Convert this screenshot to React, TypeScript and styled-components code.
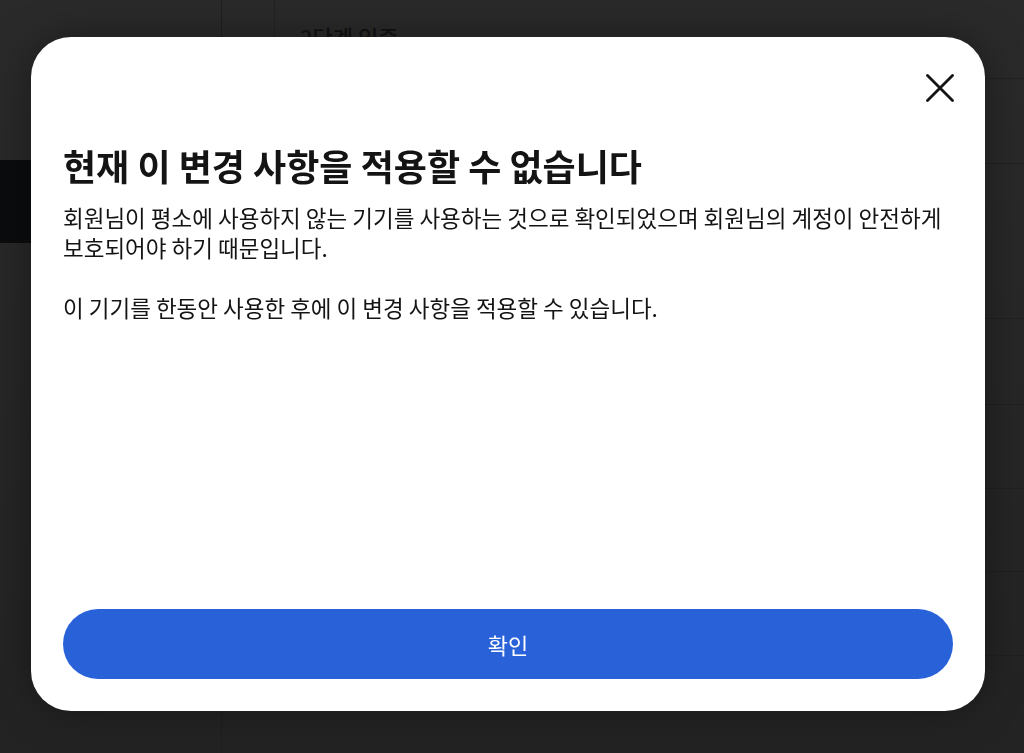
import React from "react";
import styled, { createGlobalStyle } from "styled-components";

const Global = createGlobalStyle`
  html, body { margin: 0; padding: 0; }
  body {
    background: #282828;
    font-family: "Noto Sans CJK KR", "Noto Sans", sans-serif;
    overflow: hidden;
  }
  * { box-sizing: border-box; }
`;

const Page = styled.div`
  display: flex;
  width: 1024px;
  height: 753px;
  background: linear-gradient(#2a2a2a, #232323);
`;

const Sidebar = styled.nav`
  width: 222px;
  flex: none;
  border-right: 1px solid #1f1f1f;
  display: flex;
  flex-direction: column;
  padding-top: 160px;
`;

const NavItem = styled.div<{ $active?: boolean }>`
  height: 83px;
  background: ${(p) => (p.$active ? "#0b0c0e" : "transparent")};
`;

const Main = styled.main`
  flex: 1;
  display: flex;
  flex-direction: column;
`;

const Header = styled.header`
  height: 79px;
  display: flex;
  border-bottom: 1px solid #222;
`;

const BackCol = styled.div`
  width: 53px;
  border-right: 1px solid #222;
`;

const PageTitle = styled.h1`
  margin: 0;
  padding: 20px 0 0 25px;
  font-size: 22px;
  font-weight: 500;
  color: #121212;
  line-height: 32px;
`;

const Row = styled.div<{ $h: number }>`
  height: ${(p) => p.$h}px;
  border-bottom: 1px solid #202020;
`;

const Overlay = styled.div`
  position: fixed;
  inset: 0;
  display: flex;
  align-items: flex-start;
  padding: 37px 0 0 31px;
`;

const Modal = styled.div`
  width: 954px;
  height: 674px;
  background: #fff;
  border-radius: 40px;
  padding: 32px;
  display: flex;
  flex-direction: column;
  box-shadow: 0 0 40px rgba(0, 0, 0, 0.35);
`;

const TopBar = styled.div`
  display: flex;
  justify-content: flex-end;
  height: 72px;
`;

const CloseButton = styled.button`
  width: 40px;
  height: 40px;
  margin-top: -1px;
  margin-right: -7px;
  border: none;
  background: none;
  padding: 0;
  display: flex;
  align-items: center;
  justify-content: center;
  cursor: pointer;
`;

const Title = styled.h2`
  margin: 0;
  font-size: 36px;
  font-weight: 700;
  line-height: 48px;
  color: #141414;
`;

const Body = styled.div`
  margin-top: 13px;
  margin-right: -4px;
  font-size: 22.5px;
  line-height: 30px;
  color: #141414;
  flex: 1;
`;

const Para = styled.p`
  margin: 0 0 30px 0;
`;

const ConfirmButton = styled.button`
  height: 70px;
  width: 100%;
  border: none;
  border-radius: 35px;
  background: #2962d8;
  color: #fff;
  font-family: "Noto Sans CJK KR", "Noto Sans", sans-serif;
  font-size: 22px;
  font-weight: 400;
  padding-bottom: 2px;
  cursor: pointer;
`;

export default function App() {
  return (
    <>
      <Global />
      <Page>
        <Sidebar>
          <NavItem $active />
          <NavItem />
        </Sidebar>
        <Main>
          <Header>
            <BackCol />
            <PageTitle>2단계 인증</PageTitle>
          </Header>
          <Row $h={85} />
          <Row $h={155} />
          <Row $h={86} />
          <Row $h={84} />
          <Row $h={83} />
          <Row $h={84} />
        </Main>
      </Page>
      <Overlay>
        <Modal role="dialog">
          <TopBar>
            <CloseButton aria-label="닫기">
              <svg width="28" height="28" viewBox="0 0 28 28" fill="none">
                <path d="M1.5 1.5L26.5 26.5M26.5 1.5L1.5 26.5" stroke="#141414" strokeWidth="2.8" strokeLinecap="round" />
              </svg>
            </CloseButton>
          </TopBar>
          <Title>현재 이 변경 사항을 적용할 수 없습니다</Title>
          <Body>
            <Para>
              회원님이 평소에 사용하지 않는 기기를 사용하는 것으로 확인되었으며 회원님의 계정이 안전하게 보호되어야 하기 때문입니다.
            </Para>
            <Para>이 기기를 한동안 사용한 후에 이 변경 사항을 적용할 수 있습니다.</Para>
          </Body>
          <ConfirmButton>확인</ConfirmButton>
        </Modal>
      </Overlay>
    </>
  );
}
